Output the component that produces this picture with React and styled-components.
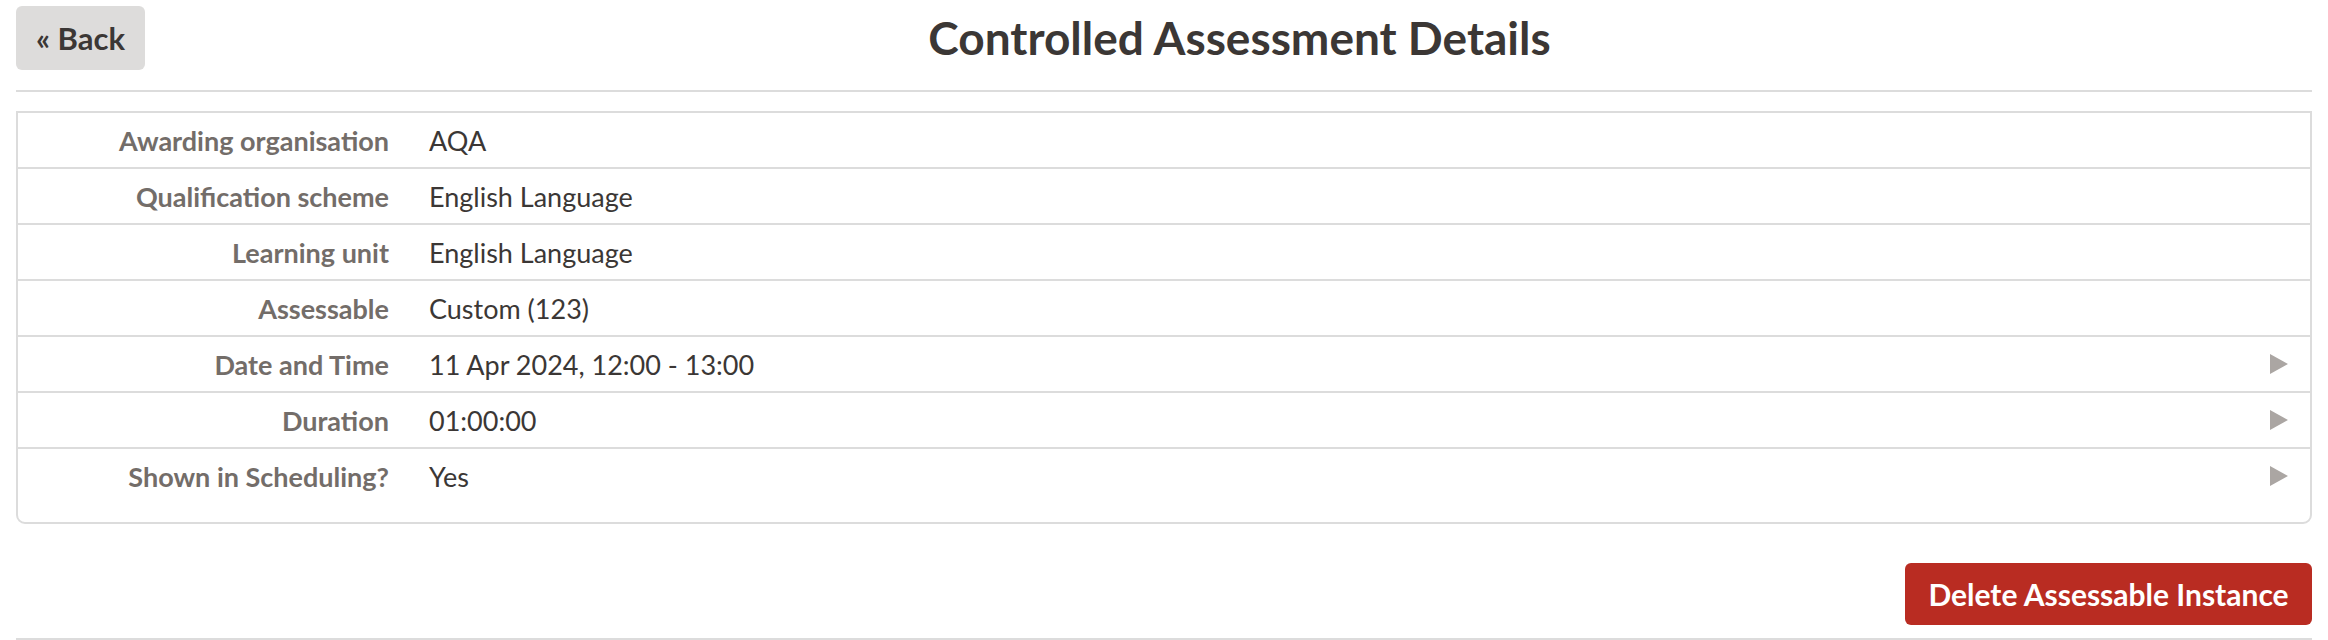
import React from "react";
import styled, { createGlobalStyle } from "styled-components";

const Global = createGlobalStyle`
  body {
    margin: 0;
    background: #fff;
    font-family: Lato, "Liberation Sans", sans-serif;
    color: #3b3735;
  }
`;

const Page = styled.div`
  padding: 6px 16px 0 16px;
`;

const Header = styled.div`
  display: flex;
  align-items: center;
  height: 64px;
`;

const BackButton = styled.button`
  width: 129px;
  height: 64px;
  border: none;
  border-radius: 6px;
  background: #dddcdb;
  color: #3b3735;
  font-family: inherit;
  font-weight: 700;
  font-size: 31px;
  cursor: pointer;
`;

const Title = styled.h1`
  flex: 1;
  margin: 0;
  padding-left: 22px;
  text-align: center;
  font-size: 46px;
  font-weight: 700;
  line-height: 64px;
  color: #3b3735;
`;

const Rule = styled.hr`
  margin: ${(p) => p.$top}px 0 0 0;
  border: none;
  border-top: 2px solid #dcdcdc;
  height: 0;
`;

const Box = styled.div`
  margin-top: 19px;
  border: 2px solid #dcdcdc;
  border-radius: 0 0 9px 9px;
  padding-bottom: 19px;
`;

const Row = styled.div`
  display: flex;
  align-items: center;
  height: 54px;
  border-bottom: ${(p) => (p.$last ? "none" : "2px solid #dcdcdc")};
`;

const Label = styled.div`
  width: 371px;
  padding-right: 16px;
  text-align: right;
  font-size: 27px;
  font-weight: 700;
  color: #736d69;
  white-space: nowrap;
`;

const Value = styled.div`
  flex: 1;
  padding-left: 24px;
  font-size: 27px;
  color: #3b3735;
  white-space: nowrap;
`;

const Arrow = styled.svg`
  width: 18px;
  height: 20px;
  margin-right: 22px;
  fill: #aba6a3;
`;

const Actions = styled.div`
  display: flex;
  justify-content: flex-end;
  margin-top: 39px;
`;

const DeleteButton = styled.button`
  width: 407px;
  height: 62px;
  border: none;
  border-radius: 6px;
  background: #b92c22;
  color: #fff;
  font-family: inherit;
  font-weight: 700;
  font-size: 30px;
  cursor: pointer;
`;

const rows = [
  { label: "Awarding organisation", value: "AQA" },
  { label: "Qualification scheme", value: "English Language" },
  { label: "Learning unit", value: "English Language" },
  { label: "Assessable", value: "Custom (123)" },
  { label: "Date and Time", value: "11 Apr 2024, 12:00 - 13:00", more: true },
  { label: "Duration", value: "01:00:00", more: true },
  { label: "Shown in Scheduling?", value: "Yes", more: true },
];

export default function App() {
  return (
    <>
      <Global />
      <Page>
        <Header>
          <BackButton>« Back</BackButton>
          <Title>Controlled Assessment Details</Title>
        </Header>
        <Rule $top={20} />
        <Box>
          {rows.map((r, i) => (
            <Row key={r.label} $last={i === rows.length - 1}>
              <Label>{r.label}</Label>
              <Value>{r.value}</Value>
              {r.more && (
                <Arrow viewBox="0 0 18 20">
                  <polygon points="0,0 18,10 0,20" />
                </Arrow>
              )}
            </Row>
          ))}
        </Box>
        <Actions>
          <DeleteButton>Delete Assessable Instance</DeleteButton>
        </Actions>
        <Rule $top={13} />
      </Page>
    </>
  );
}
